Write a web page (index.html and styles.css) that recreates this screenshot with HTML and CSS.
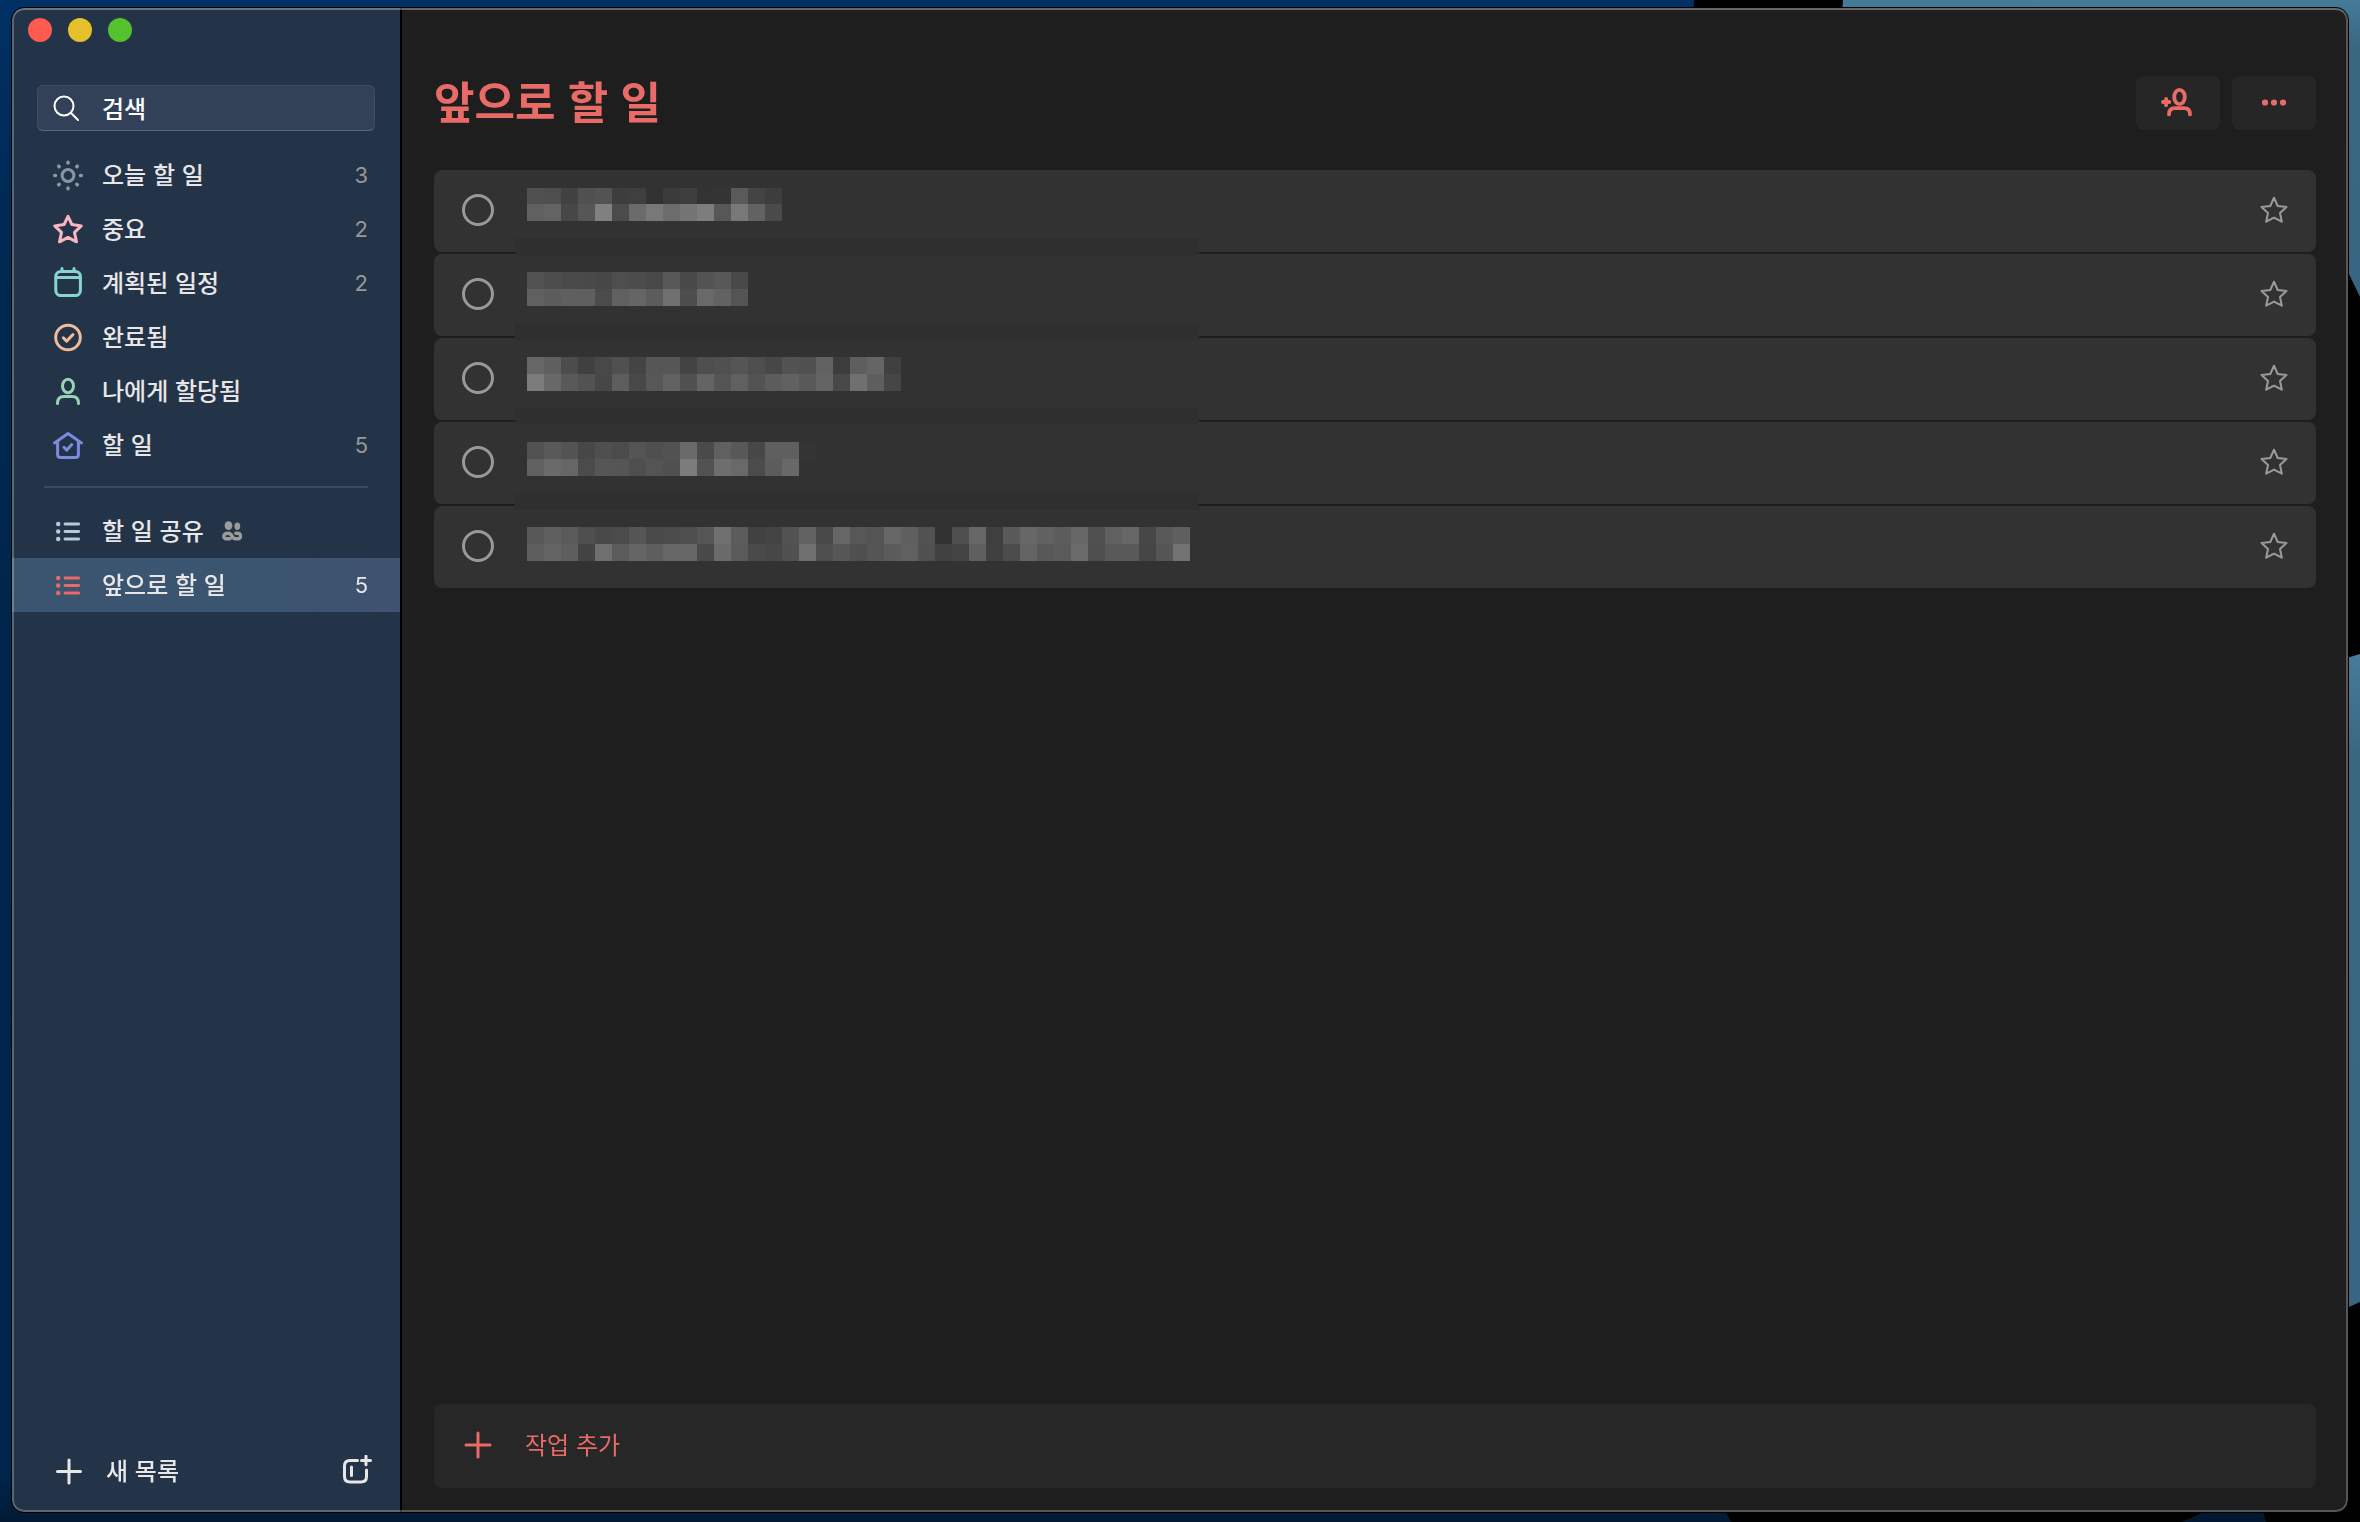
FILE: index.html
```html
<!DOCTYPE html>
<html lang="ko">
<head>
<meta charset="utf-8">
<meta name="viewport" content="width=device-width, initial-scale=1">
<title>앞으로 할 일</title>
<link rel="stylesheet" href="styles.css">
</head>
<body>
<svg class="wallpaper" viewBox="0 0 2360 1522" preserveAspectRatio="none" aria-hidden="true">
  <defs>
    <linearGradient id="sea" x1="0" y1="0" x2="0" y2="1">
      <stop offset="0" stop-color="#003064"/>
      <stop offset="0.2" stop-color="#00274e"/>
      <stop offset="0.97" stop-color="#00244b"/>
      <stop offset="1" stop-color="#021934"/>
    </linearGradient>
    <linearGradient id="sky" x1="0" y1="0" x2="0" y2="1">
      <stop offset="0" stop-color="#457c9a"/>
      <stop offset="0.15" stop-color="#3a6780"/>
      <stop offset="1" stop-color="#376480"/>
    </linearGradient>
  </defs>
  <rect width="2360" height="1522" fill="#000"/>
  <path d="M0 0H1694L1690 60 1720 1500 1731 1522H0Z" fill="url(#sea)"/>
  <path d="M1843 0H2360V297L2349 274H2300L1840 40Z" fill="url(#sky)"/>
  <path d="M2340 660L2360 654V1302L2340 1311Z" fill="url(#sky)"/>
  <path d="M2182 1522L2204 1512H2263L2266 1522Z" fill="#021831"/>
</svg>

<div class="window">
  <aside class="sidebar">
    <div class="lights">
      <button class="light light-close" aria-label="닫기"></button>
      <button class="light light-min" aria-label="최소화"></button>
      <button class="light light-zoom" aria-label="확대"></button>
    </div>

    <label class="search">
      <svg class="icon" viewBox="0 0 32 32" stroke-width="2"><circle cx="14" cy="14" r="9.5"/><path d="M21 21l7 7"/></svg>
      <input type="search" placeholder="검색" aria-label="검색">
    </label>

    <nav class="lists">
      <a class="list-link" href="#today">
        <svg class="icon sun" viewBox="0 0 32 32"><circle cx="16" cy="16.500" r="5.900"/><path stroke-width="3.6" d="M16 3.200v.8M16 29v.8M2.700 16.500h.8M28.500 16.500h.8M6.700 7.200l.5.5M24.800 25.300l.5.5M25.300 7.200l-.5.5M7.200 25.300l-.5.5"/></svg>
        <span class="name">오늘 할 일</span><span class="count">3</span>
      </a>
      <a class="list-link" href="#important">
        <svg class="icon pink" viewBox="0 0 32 32"><path d="M16 3.400L19.900 11.500 29.300 12.900 22.500 19.400 24.500 28.800 16 24.400 7.500 28.800 9.500 19.400 2.700 12.900 12.100 11.500Z"/></svg>
        <span class="name">중요</span><span class="count">2</span>
      </a>
      <a class="list-link" href="#planned">
        <svg class="icon teal" viewBox="0 0 32 32"><rect x="3.800" y="4.400" width="24.600" height="24.200" rx="5"/><path d="M4 10.500h24M10 1.500v3M22 1.500v3"/></svg>
        <span class="name">계획된 일정</span><span class="count">2</span>
      </a>
      <a class="list-link" href="#done">
        <svg class="icon peach" viewBox="0 0 32 32"><circle cx="16" cy="16.500" r="12.300"/><path d="M11.300 16.800l3.300 3.300 6.300-6.500"/></svg>
        <span class="name">완료됨</span>
      </a>
      <a class="list-link" href="#assigned">
        <svg class="icon mint" viewBox="0 0 32 32"><ellipse cx="16" cy="11" rx="5.500" ry="6.700"/><path d="M5.500 28.500c0-4.600 2.600-6.900 6.500-6.900h8c3.900 0 6.500 2.300 6.500 6.900"/></svg>
        <span class="name">나에게 할당됨</span>
      </a>
      <a class="list-link" href="#tasks">
        <svg class="icon indigo" viewBox="0 0 32 32"><path d="M2.500 14L16 4.600 29.500 14M5.600 13v12.500q0 3 3 3h14.800q3 0 3-3V13"/><path d="M12 18.300l2.800 2.800 5-5.600"/></svg>
        <span class="name">할 일</span><span class="count">5</span>
      </a>
      <hr class="divider">
      <a class="list-link" href="#shared">
        <svg class="icon ice" viewBox="0 0 32 32"><path stroke-width="2.800" d="M13 9h13.700M13 16.500h13.700M13 24h13.700"/><path stroke-width="4.400" d="M6.200 9h.01M6.200 16.500h.01M6.200 24h.01"/></svg>
        <span class="name">할 일 공유</span>
        <svg class="shared" viewBox="0 0 20 20" role="img" aria-label="공유됨"><ellipse cx="6.500" cy="4.600" rx="3.900" ry="4.400"/><ellipse cx="15.300" cy="5.200" rx="2.900" ry="3.700"/><path d="M8 17.700H3.800C.9 17.700.9 12.300 6 12.300 11.200 12.300 8.600 17.700 13.600 17.700H16.500C19.300 17.700 19.300 12.500 16 12.300H13.800"/></svg>
      </a>
      <a class="list-link current" href="#upcoming" aria-current="page">
        <svg class="icon coral" viewBox="0 0 32 32"><path stroke-width="2.800" d="M13 9h13.700M13 16.500h13.700M13 24h13.700"/><path stroke-width="4.400" d="M6.200 9h.01M6.200 16.500h.01M6.200 24h.01"/></svg>
        <span class="name">앞으로 할 일</span><span class="count">5</span>
      </a>
    </nav>

    <div class="sidebar-foot">
      <button class="new-list">
        <svg class="icon" viewBox="0 0 32 32"><path d="M17 5v23M5.500 16.500h23"/></svg>
        <span class="name">새 목록</span>
      </button>
      <button class="new-group" aria-label="새 그룹">
        <svg class="icon" viewBox="0 0 32 32"><path d="M15.500 5.500H8q-5.500 0-5.500 5.500v10.500q0 5.500 5.500 5.500h11q5.500 0 5.500-5.500V15M9.500 12v8.500M19.500 5.500h9M24 1.200v8.600"/></svg>
      </button>
    </div>
  </aside>

  <main class="main">
    <header class="head">
      <h1>앞으로 할 일</h1>
      <div class="actions">
        <button class="action" aria-label="목록 공유">
          <svg viewBox="0 0 36 36"><ellipse cx="19.500" cy="12" rx="5.300" ry="7.200"/><path d="M9 29.400c0-4 2.200-6.300 6-6.300h9c3.800 0 6 2.300 6 6.300M2.900 17h6.400M6.100 13.800v6.400"/></svg>
        </button>
        <button class="action" aria-label="기타 옵션">
          <svg viewBox="0 0 36 36"><path stroke-width="6.200" d="M9 17.500h.01M18 17.500h.01M27 17.500h.01"/></svg>
        </button>
      </div>
    </header>

    <div class="tasks">
      <ul class="task-list">
        <li class="task"><input type="checkbox" aria-label="완료로 표시"><button class="star" aria-label="중요로 표시"><svg viewBox="0 0 32 32"><path d="M16 3.700L19.700 12 28.500 13 22 19 23.800 27.700 16 23.600 8.200 27.700 10 19 3.500 13 12.300 12Z"/></svg></button></li>
        <li class="task"><input type="checkbox" aria-label="완료로 표시"><button class="star" aria-label="중요로 표시"><svg viewBox="0 0 32 32"><path d="M16 3.700L19.700 12 28.500 13 22 19 23.800 27.700 16 23.600 8.200 27.700 10 19 3.500 13 12.300 12Z"/></svg></button></li>
        <li class="task"><input type="checkbox" aria-label="완료로 표시"><button class="star" aria-label="중요로 표시"><svg viewBox="0 0 32 32"><path d="M16 3.700L19.700 12 28.500 13 22 19 23.800 27.700 16 23.600 8.200 27.700 10 19 3.500 13 12.300 12Z"/></svg></button></li>
        <li class="task"><input type="checkbox" aria-label="완료로 표시"><button class="star" aria-label="중요로 표시"><svg viewBox="0 0 32 32"><path d="M16 3.700L19.700 12 28.500 13 22 19 23.800 27.700 16 23.600 8.200 27.700 10 19 3.500 13 12.300 12Z"/></svg></button></li>
        <li class="task"><input type="checkbox" aria-label="완료로 표시"><button class="star" aria-label="중요로 표시"><svg viewBox="0 0 32 32"><path d="M16 3.700L19.700 12 28.500 13 22 19 23.800 27.700 16 23.600 8.200 27.700 10 19 3.500 13 12.300 12Z"/></svg></button></li>
      </ul>
      <svg class="mosaic" width="684" height="392" viewBox="0 0 684 392" shape-rendering="crispEdges" aria-hidden="true"></svg>
    </div>

    <button class="add-task">
      <svg viewBox="0 0 32 32"><path d="M16 4v24M4 16h24"/></svg>
      <span class="name">작업 추가</span>
    </button>
  </main>
</div>
<script src="mosaic.js"></script>
</body>
</html>
```

FILE: styles.css
```css
* {
  box-sizing: border-box;
}

body {
  margin: 0;
  min-height: 100vh;
  padding: 8px 12px 10px;
  display: flex;
  background: #000;
  color: #e8e6e6;
  font-family: "Noto Sans CJK KR", sans-serif;
  font-size: 24px;
  font-weight: 500;
  line-height: 36px;
}

button,
input {
  margin: 0;
  padding: 0;
  border: 0;
  background: none;
  color: inherit;
  font: inherit;
}

svg {
  display: block;
  flex: none;
  fill: none;
  stroke: currentColor;
  stroke-linecap: round;
  stroke-linejoin: round;
}

.wallpaper {
  position: fixed;
  inset: 0;
  width: 100%;
  height: 100%;
  z-index: -1;
  stroke: none;
}

.window {
  position: relative;
  flex: 1;
  display: flex;
  border-radius: 12px;
  background: #1e1e1e;
  overflow: hidden;
  outline: 1px solid #000;
}

.window::after {
  content: "";
  position: absolute;
  inset: 0;
  border: 2px solid rgba(255, 255, 255, 0.25);
  border-top-color: rgba(255, 255, 255, 0.32);
  border-radius: 12px;
  pointer-events: none;
}

/* Sidebar */

.sidebar {
  flex: none;
  width: 390px;
  display: flex;
  flex-direction: column;
  border-right: 2px solid #000;
  background: #233348;
}

.lights {
  display: flex;
  gap: 16px;
  padding: 10px 16px;
}

.light {
  width: 24px;
  height: 24px;
  border-radius: 50%;
}

.light-close { background: #ff5b51; }
.light-min { background: #e6c02b; }
.light-zoom { background: #54c22c; }

.icon {
  width: 32px;
  height: 32px;
  stroke-width: 3;
}

.name {
  padding-bottom: 3px;
}

.search {
  display: flex;
  align-items: center;
  gap: 20px;
  height: 46px;
  margin: 33px 25px 17px;
  padding: 0 12px;
  border: 1px solid #3f4e64;
  border-bottom-color: #5b697d;
  border-radius: 6px;
  background: #324158;
  color: #fff;
}

.search .icon {
  stroke-width: 2;
}

.search input {
  flex: 1;
  min-width: 0;
  height: 36px;
  outline: none;
  appearance: none;
}

.search input::placeholder {
  color: #fff;
  opacity: 1;
}

.sun { color: #8797a5; }
.pink { color: #f9b6c2; }
.teal { color: #88d5cf; }
.peach { color: #f0bb9b; }
.mint { color: #99d3b5; }
.indigo { color: #7b8ce0; }
.ice { color: #b5ccd8; }
.coral { color: #e86b67; }

.list-link {
  display: flex;
  align-items: center;
  gap: 18px;
  height: 54px;
  padding: 0 32px 0 40px;
  color: inherit;
  text-decoration: none;
}

.count {
  margin-left: auto;
  color: #979899;
  font-family: Inter, sans-serif;
  font-size: 22px;
  font-weight: 400;
}

.current {
  background: linear-gradient(90deg, #3b5470 70%, #40526f);
}

.current .count {
  color: #e8e6e6;
}

.shared {
  width: 20px;
  height: 20px;
  color: #9b9b9b;
  stroke-width: 3.4;
}

.shared ellipse {
  fill: currentColor;
  stroke: none;
}

.divider {
  height: 2px;
  margin: 14px 32px 16px;
  border: 0;
  background: #3d4a5d;
}

.sidebar-foot {
  display: flex;
  align-items: center;
  justify-content: space-between;
  height: 54px;
  margin-top: auto;
  margin-bottom: 14px;
  padding: 0 26px 0 40px;
}

.new-list {
  display: flex;
  align-items: center;
  gap: 22px;
}

/* Main pane */

.main {
  flex: 1;
  min-width: 0;
  display: flex;
  flex-direction: column;
  padding: 68px 32px 24px;
  color: #e86b67;
}

.head {
  display: flex;
  align-items: center;
  justify-content: space-between;
  height: 54px;
  margin-bottom: 40px;
}

h1 {
  margin: 0;
  padding-bottom: 6px;
  font-size: 44px;
  font-weight: 700;
  line-height: 54px;
}

.actions {
  display: flex;
  gap: 12px;
}

.action {
  display: grid;
  place-items: center;
  width: 84px;
  height: 54px;
  border-radius: 8px;
  background: #262626;
}

.action svg {
  width: 36px;
  height: 36px;
  stroke-width: 3.8;
}

.tasks {
  position: relative;
}

.task-list {
  display: flex;
  flex-direction: column;
  gap: 2px;
  margin: 0;
  padding: 0;
  list-style: none;
}

.task {
  display: flex;
  align-items: center;
  justify-content: space-between;
  height: 82px;
  padding: 0 26px 2px 28px;
  border-radius: 8px;
  background: #323232;
  color: #9b9b9b;
}

.task input {
  appearance: none;
  width: 32px;
  height: 32px;
  border: 3px solid #999;
  border-radius: 50%;
}

.star svg {
  width: 32px;
  height: 32px;
  stroke-width: 2;
}

/* Pixelated cover that hides the task titles */
.mosaic {
  position: absolute;
  left: 81px;
  top: 18px;
  stroke: none;
  pointer-events: none;
}

.add-task {
  display: flex;
  align-items: center;
  gap: 31px;
  height: 84px;
  margin-top: auto;
  padding: 0 28px 2px;
  border-radius: 8px;
  background: #272727;
  font-weight: 400;
}

.add-task svg {
  width: 32px;
  height: 32px;
  stroke-width: 3;
}
```

FILE: mosaic.js
```js
// Draws the pixelated cover over the task titles: two lines of grey cells per
// title, and a plain strip between one title and the next.
const CELL = 17;
const LEFT = 12;
const WIDTH = 684;
const titles = [
  ["50 4e 41 50 53 3d 3f 32 3b 3e 33 34 5a 44 3d",
   "60 63 47 56 80 4b 6b 78 6c 74 7d 57 78 62 4a"],
  ["51 4d 4a 49 47 4e 4c 48 58 49 53 58 49",
   "60 5c 5f 5f 4b 60 65 5c 70 4d 69 62 54"],
  ["66 5f 4c 40 48 50 44 56 56 43 4e 50 55 4e 47 52 50 62 3c 5e 65 40",
   "7b 68 59 52 47 5d 48 57 62 50 64 55 60 53 5c 61 59 64 48 70 5e 46"],
  ["51 59 53 47 4f 4b 54 4f 52 6a 4a 60 58 47 5f 5f 34",
   "60 6a 66 4b 56 55 4e 54 50 7c 52 6e 69 4b 5c 68"],
  ["58 5f 5a 4f 49 4b 55 4a 4b 4e 56 70 5c 41 44 52 62 49 66 57 54 66 5f 52 32 4e 66 3f 59 67 61 5c 66 50 60 66 47 59 5f",
   "5e 64 5e 43 6f 5c 65 5e 66 66 49 6a 5a 4a 47 50 6f 4f 56 4f 55 5b 60 50 41 44 5f 40 4b 63 58 5a 6b 4e 59 59 46 55 72"],
];

const svg = document.querySelector(".mosaic");

function cell(x, y, width, height, grey) {
  const rect = document.createElementNS("http://www.w3.org/2000/svg", "rect");
  rect.setAttribute("x", x);
  rect.setAttribute("y", y);
  rect.setAttribute("width", width);
  rect.setAttribute("height", height);
  rect.setAttribute("fill", "#" + grey.repeat(3));
  svg.append(rect);
}

titles.forEach(([upper, lower], row) => {
  const middle = 16 + row * 5 * CELL;
  const top = Math.max(0, middle - CELL);
  upper.split(" ").forEach((grey, i) => cell(LEFT + i * CELL, top, CELL, middle - top, grey));
  lower.split(" ").forEach((grey, i) => cell(LEFT + i * CELL, middle, CELL, CELL, grey));
  if (row < titles.length - 1) cell(0, middle + 2 * CELL, WIDTH, CELL, "2f");
});
```
